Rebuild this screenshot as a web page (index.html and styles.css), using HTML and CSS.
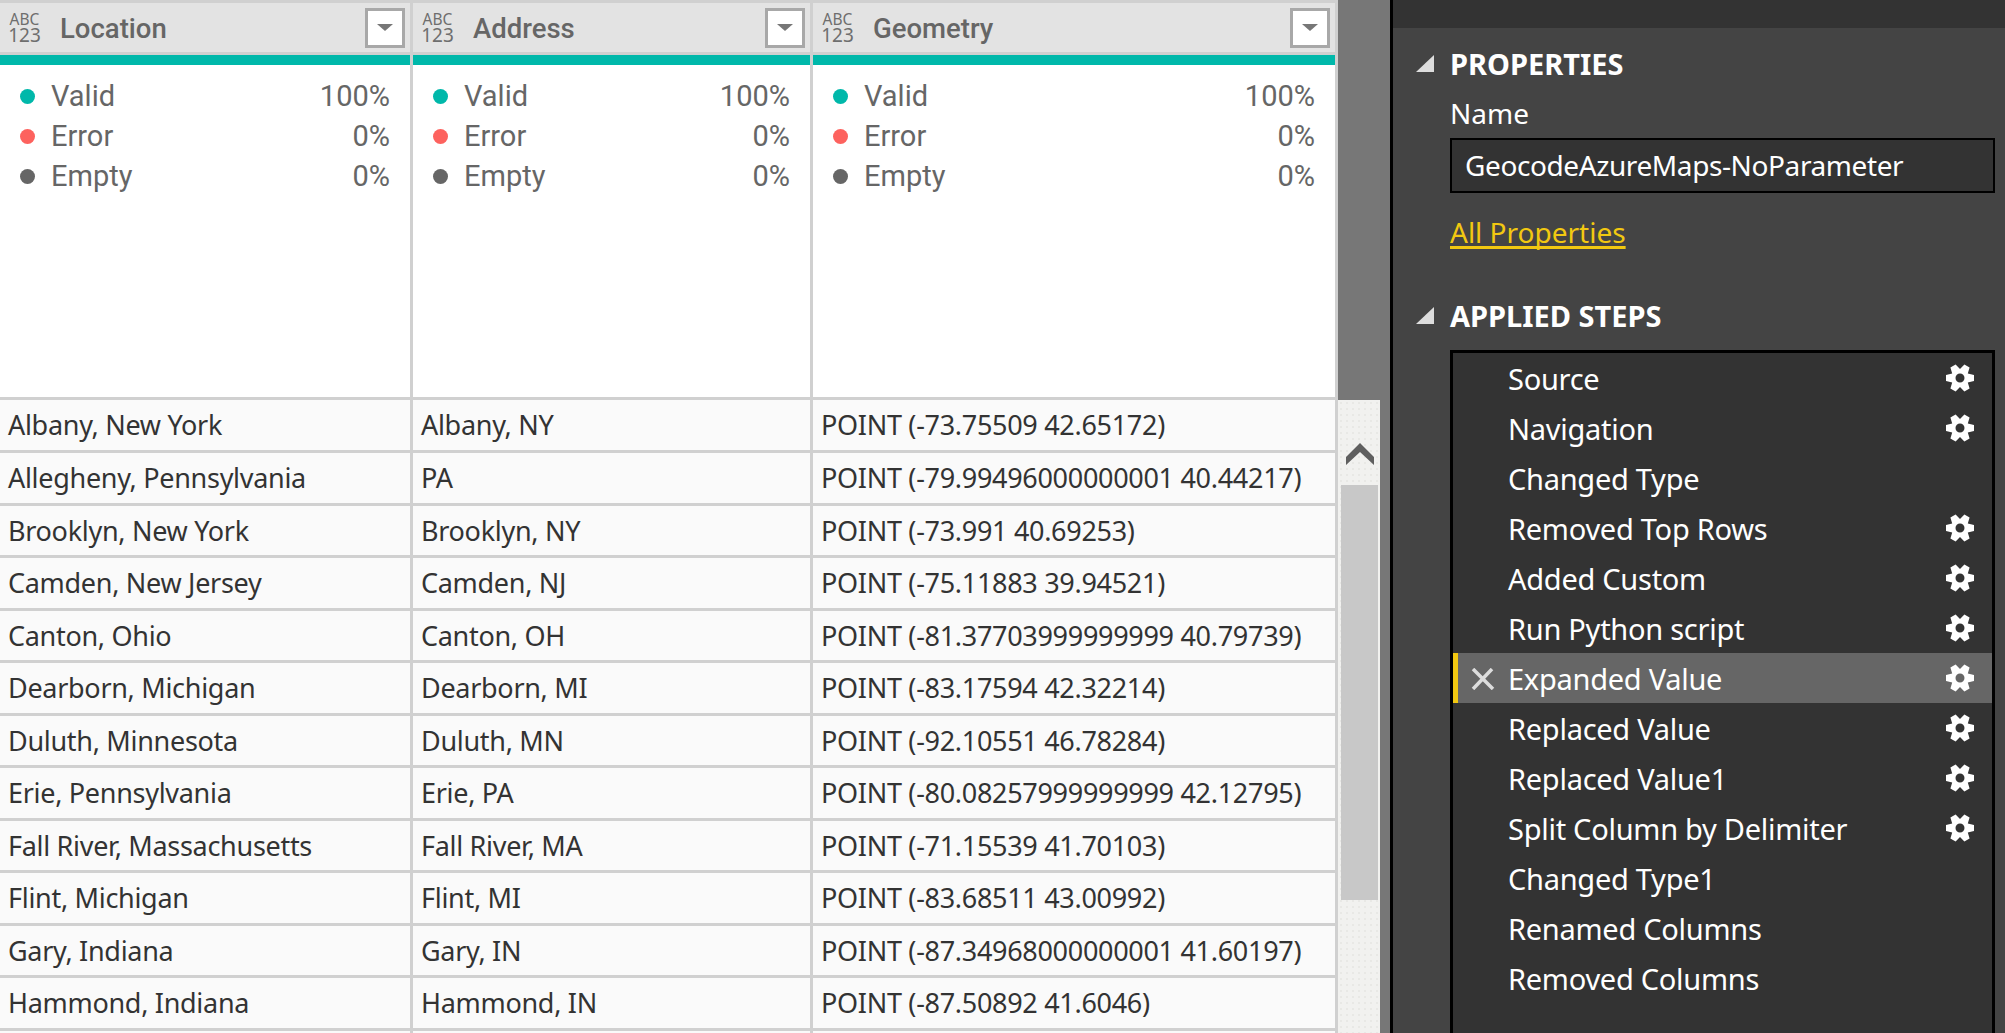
FILE: index.html
```html
<!DOCTYPE html>
<html lang="en">
<head>
  <meta charset="UTF-8">
  <title>Power Query Editor</title>
  <link rel="stylesheet" href="styles.css">
</head>
<body>
  <svg class="defs" width="0" height="0">
    <symbol id="gear" viewBox="0 0 28 28">
      <path fill-rule="evenodd" d="M28 11v6l-6.2 1.5 1.8 6.100-5.200 3L14 23l-4.400 4.600-5.200-3 1.800-6.100L0 17v-6l6.200-1.500-1.800-6.100 5.200-3L14 5l4.400-4.600 5.200 3-1.800 6.100zM14 9.500a4.500 4.500 0 1 0 0 9 4.500 4.500 0 0 0 0-9z"/>
    </symbol>
  </svg>

  <div class="app">
    <div class="table">
      <div class="col">
        <div class="col-head">
          <div class="type-icon"><span>ABC</span><span>123</span></div>
          <div class="col-title">Location</div>
          <div class="filter-btn"><i></i></div>
        </div>
        <div class="quality-bar"></div>
        <div class="quality">
          <div class="q-row"><b class="dot valid"></b><span>Valid</span><em>100%</em></div>
          <div class="q-row"><b class="dot error"></b><span>Error</span><em>0%</em></div>
          <div class="q-row"><b class="dot empty"></b><span>Empty</span><em>0%</em></div>
        </div>
        <div class="cell">Albany, New York</div>
        <div class="cell">Allegheny, Pennsylvania</div>
        <div class="cell">Brooklyn, New York</div>
        <div class="cell">Camden, New Jersey</div>
        <div class="cell">Canton, Ohio</div>
        <div class="cell">Dearborn, Michigan</div>
        <div class="cell">Duluth, Minnesota</div>
        <div class="cell">Erie, Pennsylvania</div>
        <div class="cell">Fall River, Massachusetts</div>
        <div class="cell">Flint, Michigan</div>
        <div class="cell">Gary, Indiana</div>
        <div class="cell">Hammond, Indiana</div>
        <div class="cell"></div>
      </div>

      <div class="col">
        <div class="col-head">
          <div class="type-icon"><span>ABC</span><span>123</span></div>
          <div class="col-title">Address</div>
          <div class="filter-btn"><i></i></div>
        </div>
        <div class="quality-bar"></div>
        <div class="quality">
          <div class="q-row"><b class="dot valid"></b><span>Valid</span><em>100%</em></div>
          <div class="q-row"><b class="dot error"></b><span>Error</span><em>0%</em></div>
          <div class="q-row"><b class="dot empty"></b><span>Empty</span><em>0%</em></div>
        </div>
        <div class="cell">Albany, NY</div>
        <div class="cell">PA</div>
        <div class="cell">Brooklyn, NY</div>
        <div class="cell">Camden, NJ</div>
        <div class="cell">Canton, OH</div>
        <div class="cell">Dearborn, MI</div>
        <div class="cell">Duluth, MN</div>
        <div class="cell">Erie, PA</div>
        <div class="cell">Fall River, MA</div>
        <div class="cell">Flint, MI</div>
        <div class="cell">Gary, IN</div>
        <div class="cell">Hammond, IN</div>
        <div class="cell"></div>
      </div>

      <div class="col">
        <div class="col-head">
          <div class="type-icon"><span>ABC</span><span>123</span></div>
          <div class="col-title">Geometry</div>
          <div class="filter-btn"><i></i></div>
        </div>
        <div class="quality-bar"></div>
        <div class="quality">
          <div class="q-row"><b class="dot valid"></b><span>Valid</span><em>100%</em></div>
          <div class="q-row"><b class="dot error"></b><span>Error</span><em>0%</em></div>
          <div class="q-row"><b class="dot empty"></b><span>Empty</span><em>0%</em></div>
        </div>
        <div class="cell">POINT (-73.75509 42.65172)</div>
        <div class="cell">POINT (-79.99496000000001 40.44217)</div>
        <div class="cell">POINT (-73.991 40.69253)</div>
        <div class="cell">POINT (-75.11883 39.94521)</div>
        <div class="cell">POINT (-81.37703999999999 40.79739)</div>
        <div class="cell">POINT (-83.17594 42.32214)</div>
        <div class="cell">POINT (-92.10551 46.78284)</div>
        <div class="cell">POINT (-80.08257999999999 42.12795)</div>
        <div class="cell">POINT (-71.15539 41.70103)</div>
        <div class="cell">POINT (-83.68511 43.00992)</div>
        <div class="cell">POINT (-87.34968000000001 41.60197)</div>
        <div class="cell">POINT (-87.50892 41.6046)</div>
        <div class="cell"></div>
      </div>
    </div>

    <div class="gutter">
      <div class="scrollbar">
        <svg class="chevron" width="28" height="22" viewBox="0 0 28 22"><path d="M14 0 28 14v8L14 9 0 22v-8z"/></svg>
        <div class="thumb"></div>
      </div>
    </div>

    <div class="panel">
      <div class="panel-top"></div>
      <div class="panel-body">
        <div class="section-head"><span class="collapse"></span>PROPERTIES</div>
        <div class="field-label">Name</div>
        <div class="name-input">GeocodeAzureMaps-NoParameter</div>
        <a class="all-props" href="#">All Properties</a>
        <div class="section-head applied"><span class="collapse"></span>APPLIED STEPS</div>
        <div class="steps">
          <div class="step"><span>Source</span><svg class="gear"><use href="#gear"/></svg></div>
          <div class="step"><span>Navigation</span><svg class="gear"><use href="#gear"/></svg></div>
          <div class="step"><span>Changed Type</span></div>
          <div class="step"><span>Removed Top Rows</span><svg class="gear"><use href="#gear"/></svg></div>
          <div class="step"><span>Added Custom</span><svg class="gear"><use href="#gear"/></svg></div>
          <div class="step"><span>Run Python script</span><svg class="gear"><use href="#gear"/></svg></div>
          <div class="step selected">
            <svg class="delete" width="24" height="22" viewBox="0 0 24 22"><path d="M2 1l20 20M21 1 2 21"/></svg>
            <span>Expanded Value</span><svg class="gear"><use href="#gear"/></svg>
          </div>
          <div class="step"><span>Replaced Value</span><svg class="gear"><use href="#gear"/></svg></div>
          <div class="step"><span>Replaced Value1</span><svg class="gear"><use href="#gear"/></svg></div>
          <div class="step"><span>Split Column by Delimiter</span><svg class="gear"><use href="#gear"/></svg></div>
          <div class="step"><span>Changed Type1</span></div>
          <div class="step"><span>Renamed Columns</span></div>
          <div class="step"><span>Removed Columns</span></div>
        </div>
      </div>
    </div>
  </div>
</body>
</html>
```

FILE: styles.css
```css
html, body {
  margin: 0;
  height: 100%;
  overflow: hidden;
}
body {
  font-family: "Noto Sans", sans-serif;
  background: #777;
}
.defs {
  position: absolute;
}
.app {
  display: flex;
  height: 1033px;
}

/* Table */
.table {
  display: flex;
  height: 1033px;
  overflow: hidden;
  background: #d0d0d0;
}
.col {
  padding-right: 3px;
  padding-top: 3px;
}
.col:nth-child(1) { width: 410px; }
.col:nth-child(2) { width: 397px; }
.col:nth-child(3) { width: 522px; }

.col-head {
  display: flex;
  align-items: center;
  height: 49px;
  padding: 0 5px 0 8px;
  background: #e3e3e3;
  color: #666;
}
.type-icon {
  display: flex;
  flex-direction: column;
  width: 33px;
  margin: -2px 19px 0 0;
  color: #6e6e6e;
  text-align: center;
}
.type-icon span:first-child {
  font-size: 15.5px;
  line-height: 16px;
}
.type-icon span:last-child {
  font-size: 19px;
  line-height: 16px;
}
.col-title {
  flex: 1;
  font-family: Roboto, sans-serif;
  font-weight: 500;
  font-size: 27.5px;
  padding-top: 2px;
}
.filter-btn {
  display: flex;
  align-items: center;
  justify-content: center;
  box-sizing: border-box;
  width: 40px;
  height: 40px;
  background: #fff;
  border: 3px solid #a8a8a8;
}
.filter-btn i {
  width: 0;
  height: 0;
  border-left: 8px solid transparent;
  border-right: 8px solid transparent;
  border-top: 7px solid #777;
}
.quality-bar {
  height: 10px;
  margin-top: 3px;
  background: #00b8aa;
}
.quality {
  box-sizing: border-box;
  height: 332px;
  padding: 11px 20px 0 20px;
  background: #fff;
  color: #666;
  font-family: Roboto, sans-serif;
  font-size: 29px;
}
.q-row {
  display: flex;
  align-items: center;
  height: 40px;
}
.q-row span {
  flex: 1;
  margin-left: 16px;
}
.q-row em {
  font-style: normal;
}
.dot {
  width: 15px;
  height: 15px;
  border-radius: 50%;
}
.dot.valid { background: #00b8aa; }
.dot.error { background: #fd625e; }
.dot.empty { background: #666; }

.cell {
  box-sizing: border-box;
  height: 49.5px;
  margin-top: 3px;
  padding-left: 8px;
  background: #fafafa;
  color: #333;
  font-size: 27px;
  letter-spacing: -0.3px;
  line-height: 50px;
  white-space: nowrap;
}
.quality + .cell {
  height: 50px;
}

/* Scrollbar gutter */
.gutter {
  width: 52px;
  padding-top: 400px;
  background: #777;
}
.scrollbar {
  box-sizing: border-box;
  width: 42px;
  height: 633px;
  padding: 43px 2px 0 3px;
  background-color: #f1f1ef;
  background-image: radial-gradient(#e8e8e5 1px, transparent 1px);
  background-size: 6px 6px;
}
.chevron {
  display: block;
  margin: 0 auto;
  fill: #5f5f5f;
}
.thumb {
  height: 415px;
  margin-top: 20px;
  background: #c8c8c8;
}

/* Right panel */
.panel {
  flex: 1;
  border-left: 3px solid #000;
  background: #444;
  color: #fff;
}
.panel-top {
  height: 28px;
  background: #333;
}
.panel-body {
  padding: 19px 10px 0 57px;
}
.section-head {
  position: relative;
  font-size: 29px;
  font-weight: 700;
  line-height: 34px;
}
.section-head.applied {
  margin-top: 47px;
}
.collapse {
  position: absolute;
  left: -34px;
  top: 8px;
  width: 18px;
  height: 17px;
  background: #ddd;
  clip-path: polygon(100% 0, 100% 100%, 0 100%);
}
.field-label {
  margin-top: 13px;
  font-size: 28px;
  line-height: 38px;
}
.name-input {
  box-sizing: border-box;
  height: 55px;
  margin-top: 6px;
  padding-left: 13px;
  background: #333;
  border: 2px solid #000;
  font-size: 28px;
  letter-spacing: -0.4px;
  line-height: 50px;
}
.all-props {
  display: block;
  width: fit-content;
  margin-top: 19px;
  color: #f2c811;
  font-size: 28px;
  line-height: 40px;
  text-decoration-thickness: 3px;
  text-decoration-skip-ink: none;
  text-underline-offset: 3px;
}
.steps {
  box-sizing: border-box;
  height: 700px;
  margin-top: 17px;
  background: #333;
  border: 3px solid #000;
}
.step {
  position: relative;
  display: flex;
  align-items: center;
  justify-content: space-between;
  height: 50px;
  padding: 0 18px 0 55px;
  font-size: 29px;
  letter-spacing: -0.27px;
}
.step.selected {
  background: #666;
  box-shadow: inset 5px 0 #f2c811;
}
.gear {
  width: 28px;
  height: 28px;
  fill: #fff;
}
.delete {
  position: absolute;
  left: 18px;
  top: 15px;
  fill: none;
  stroke: #ddd;
  stroke-width: 3.5;
}
```
